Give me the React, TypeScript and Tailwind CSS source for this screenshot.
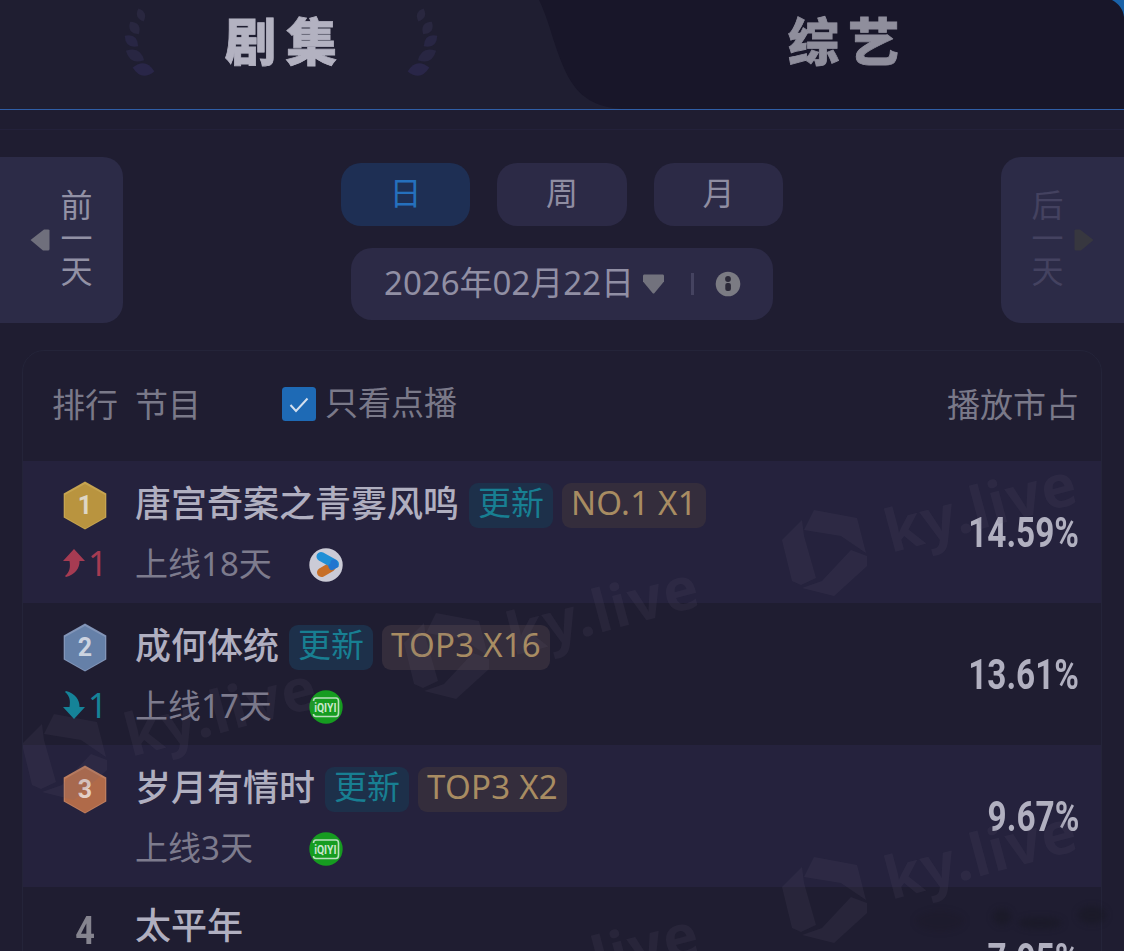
import clsx from "clsx";

type Platform = "youku" | "iqiyi";

type Show = {
  rank: number;
  title: string;
  change?: number;
  days?: number;
  platform?: Platform;
  tags: string[];
  share: string;
};

const shows: Show[] = [
  {
    rank: 1,
    title: "唐宫奇案之青雾风鸣",
    change: 1,
    days: 18,
    platform: "youku",
    tags: ["更新", "NO.1 X1"],
    share: "14.59%",
  },
  {
    rank: 2,
    title: "成何体统",
    change: -1,
    days: 17,
    platform: "iqiyi",
    tags: ["更新", "TOP3 X16"],
    share: "13.61%",
  },
  {
    rank: 3,
    title: "岁月有情时",
    days: 3,
    platform: "iqiyi",
    tags: ["更新", "TOP3 X2"],
    share: "9.67%",
  },
  {
    rank: 4,
    title: "太平年",
    tags: [],
    share: "7.95%",
  },
];

const medals = [
  { fill: "#b9943f", edge: "#c6a450", text: "#ded6c4" },
  { fill: "#6580a8", edge: "#8295b8", text: "#ccd3e0" },
  { fill: "#b06a49", edge: "#bd7d5e", text: "#e3cfc6" },
];

// logo centers on the card, same spacing as the tiled background
const watermarks = [
  [801, 202],
  [423, 305],
  [41, 406],
  [801, 549],
  [423, 652],
];

function Laurel({ flip }: { flip?: boolean }) {
  const leaves = [
    { x: 17, y: 7, rx: 4, ry: 7, r: -22, c: "#29273f" },
    { x: 10.5, y: 20, rx: 4.8, ry: 7.6, r: -35, c: "#292740" },
    { x: 7.5, y: 33, rx: 5, ry: 8.6, r: -52, c: "#282644" },
    { x: 11, y: 47.5, rx: 5.6, ry: 10.2, r: -63, c: "#282642" },
    { x: 19.5, y: 61.5, rx: 6.2, ry: 11, r: -80, c: "#292648" },
  ];
  return (
    <svg
      className={clsx("mt-2 h-[70px] w-[32px]", flip && "-scale-x-100")}
      viewBox="0 0 32 70"
    >
      {leaves.map((l, i) => (
        <path
          key={i}
          d={`M0 ${-l.ry}Q${l.rx * 2} 0 0 ${l.ry}Q${-l.rx * 2} 0 0 ${-l.ry}Z`}
          fill={l.c}
          transform={`translate(${l.x} ${l.y}) rotate(${l.r})`}
        />
      ))}
    </svg>
  );
}

function TopTabs() {
  return (
    <div className="relative flex h-[110px] border-b border-b-[#2f5ea6] bg-[#1f1e31]">
      <svg
        className="absolute inset-0 h-[109px] w-full"
        viewBox="0 0 1124 109"
        preserveAspectRatio="none"
      >
        <path
          d="M539 0C551 24 556 58 572 83C584 101 600 107 622 109H1124V0Z"
          fill="#181629"
        />
        <path d="M1112 0C1119 4 1123 9 1124 17V0Z" fill="#1a62a8" />
      </svg>
      <div className="relative flex w-[562px] justify-between pl-[124px] pr-[124px]">
        <Laurel />
        <span className="-mr-[10px] mt-px text-[51px] font-black leading-[80px] tracking-[10px] text-[#b3b2c1] [-webkit-text-stroke:0.8px_#b3b2c1]">
          剧集
        </span>
        <Laurel flip />
      </div>
      <div className="relative flex flex-1 justify-center">
        <span className="-mr-[10px] mt-px text-[51px] font-black leading-[80px] tracking-[9px] text-[#8f8e9c] [-webkit-text-stroke:0.8px_#8f8e9c]">
          综艺
        </span>
      </div>
    </div>
  );
}

function DayButton({ label, next }: { label: string; next?: boolean }) {
  return (
    <button
      className={clsx(
        "flex h-[166px] w-[123px] items-center bg-[#2c2b47]",
        next
          ? "flex-row-reverse justify-end rounded-l-[20px] pl-[30px] text-[#444260]"
          : "rounded-r-[20px] pl-[30px] text-[#9291a5]",
      )}
    >
      <svg
        className={clsx("h-[22px] w-[20px]", next && "ml-[10px] -scale-x-100")}
        viewBox="0 0 20 22"
      >
        <path
          d="M19.5 1.5Q19.5.5 18 .5H14L.5 11L13 21.5H18Q19.5 21.5 19.5 20Z"
          fill={next ? "#37373f" : "#6f6f7c"}
        />
      </svg>
      <span
        className={clsx(
          "mb-[6px] w-[33px] text-[32px] leading-[33px]",
          !next && "ml-[10px]",
        )}
      >
        {label}
      </span>
    </button>
  );
}

function Controls() {
  return (
    <div className="flex h-[193px] justify-between">
      <div>
        <DayButton label="前一天" />
      </div>
      <div className="flex flex-col items-center pt-[6px]">
        <div className="flex gap-[27px]">
          {["日", "周", "月"].map((t, i) => (
            <button
              key={t}
              className={clsx(
                "h-[63px] w-[129.5px] rounded-[20px] pb-[3px] text-[32px] leading-none",
                i === 0
                  ? "bg-[#1e2f54] text-[#2570bd]"
                  : "bg-[#2c2a46] text-[#8f8da2]",
              )}
            >
              {t}
            </button>
          ))}
        </div>
        <div className="mt-[22px] flex h-[72px] w-[422px] items-center rounded-[21px] bg-[#2c2a46] pl-[33px]">
          <span className="w-[249px] whitespace-nowrap pb-[3px] text-[33px] leading-none text-[#918fa4]">
            2026年02月22日
          </span>
          <svg className="ml-[9px] h-[22px] w-[23px]" viewBox="0 0 23 22">
            <path
              d="M2 1.5H21Q22 1.5 22 3V8.5L12.5 20Q11.5 21 10.5 20L1 8.5V3Q1 1.5 2 1.5Z"
              fill="#72727d"
            />
          </svg>
          <span className="ml-[26px] h-[22px] w-[3px] bg-[#454360]" />
          <svg className="ml-[21px] h-[26px] w-[26px]" viewBox="0 0 26 26">
            <circle cx="13" cy="13" r="12.3" fill="#7b7b83" />
            <circle cx="13" cy="8" r="2.9" fill="#2b2938" />
            <rect x="10.3" y="12" width="5.6" height="8" rx="2" fill="#2b2938" />
          </svg>
        </div>
      </div>
      <DayButton label="后一天" next />
    </div>
  );
}

function Medal({ rank }: { rank: number }) {
  const m = medals[rank - 1];
  return (
    <svg className="h-[49px] w-[44px]" viewBox="0 0 44 49">
      <path d="M22 .5L43.3 12.5V36.5L22 48.5L.7 36.5V12.5Z" fill={m.edge} />
      <path d="M22 3L42 14V36L22 47.5L2 36V14Z" fill={m.fill} />
      <text
        x="22"
        y="33"
        textAnchor="middle"
        fontSize="25"
        fontWeight="700"
        fill={m.text}
        fontFamily="Roboto"
      >
        {rank}
      </text>
    </svg>
  );
}

function Change({ value }: { value: number }) {
  const up = value > 0;
  return (
    <div
      className={clsx(
        "flex h-[30px] items-center text-[34px] leading-none",
        up ? "text-[#a63b52]" : "text-[#158398]",
      )}
    >
      <svg
        className={clsx("h-[28px] w-[22px]", !up && "-scale-y-100")}
        viewBox="0 0 22 28"
      >
        <path
          d="M11 0L22 12H16.5C17 19 12 25.500 3 28L2 27C7 23 7.500 18 6.500 12H0Z"
          fill="currentColor"
        />
      </svg>
      <span className="ml-[3px]">{Math.abs(value)}</span>
    </div>
  );
}

function PlatformIcon({ name }: { name: Platform }) {
  if (name === "youku") {
    return (
      <svg className="h-[34px] w-[34px]" viewBox="0 0 34 34">
        <circle cx="17" cy="17" r="16.7" fill="#cbcbd6" />
        <path d="M12.500 24.500L22 19" stroke="#c76f27" strokeWidth="9" strokeLinecap="round" />
        <path d="M12 8.500L25.500 16" stroke="#1f8fd6" strokeWidth="9" strokeLinecap="round" />
        <path d="M25 15L25.500 17L23 18.500" stroke="#2274cf" strokeWidth="7" strokeLinecap="round" fill="none" />
      </svg>
    );
  }
  return (
    <svg className="h-[34px] w-[34px]" viewBox="0 0 34 34">
      <circle cx="17" cy="17" r="16.7" fill="#169c20" />
      <path
        d="M4.500 11Q4.500 8 7 8H27Q29.500 8 29.500 11V23Q29.500 26.500 27 26.500H7Q4.500 26.500 4.500 24"
        stroke="#b9dfbd"
        strokeWidth="1.6"
        fill="none"
      />
      <g transform="translate(16.300 22) scale(0.8 1)">
        <text
          textAnchor="middle"
          fontSize="13"
          fontWeight="700"
          fontFamily="Roboto"
          fill="#c9e6cc"
        >
          iQIYI
        </text>
      </g>
    </svg>
  );
}

function Tag({ children }: { children: string }) {
  const isUpdate = children === "更新";
  return (
    <span
      className={clsx(
        "mr-[9px] h-[45px] whitespace-nowrap rounded-[9px] px-[9px] text-[33px] leading-[40px]",
        isUpdate
          ? "bg-[#1d304a] text-[#187f92]"
          : "bg-[#342d3c] tracking-[0.25px] text-[#a88c62]",
      )}
    >
      {children}
    </span>
  );
}

function ShowRow({ show }: { show: Show }) {
  const { rank, title, change, days, platform, tags, share } = show;
  return (
    <div
      className={clsx(
        "flex h-[142px] shrink-0 pr-[22px]",
        rank % 2 === 1 ? "bg-[#25223d]" : "bg-[#1f1d31]",
      )}
    >
      <div className="flex w-[112px] flex-col items-start pl-[40px] pt-[20px]">
        {rank <= 3 ? (
          <Medal rank={rank} />
        ) : (
          <span className="mt-[5px] w-[44px] scale-x-90 text-center font-[Roboto] text-[38px] font-bold leading-[38px] text-[#85848f]">
            {rank}
          </span>
        )}
        {change && (
          <div className="mt-[18px]">
            <Change value={change} />
          </div>
        )}
      </div>
      <div className="flex flex-1 flex-col pt-[22px]">
        <div
          className={clsx(
            "flex items-center",
            tags.length ? "h-[45px]" : "h-[36px]",
          )}
        >
          <span className="mb-[3px] mr-[10px] text-[36px] font-medium leading-none text-[#b0afc0]">
            {title}
          </span>
          {tags.map((t) => (
            <Tag key={t}>{t}</Tag>
          ))}
        </div>
        {platform && (
          <div className="mt-[14px] flex h-[46px] items-center">
            <span className="mb-[3px] w-[174px] text-[33px] leading-none text-[#7d7b8d]">
              上线{days}天
            </span>
            <PlatformIcon name={platform} />
          </div>
        )}
      </div>
      <span className="origin-right scale-x-[0.775] self-center font-[Roboto] text-[43px] font-bold leading-none text-[#b1b0c0]">
        {share}
      </span>
    </div>
  );
}

function Watermark({ x, y }: { x: number; y: number }) {
  return (
    <svg
      className="absolute h-[180px] w-[320px]"
      style={{ left: x - 50, top: y - 110 }}
      viewBox="-50 -110 320 180"
      fill="#6b6678"
      fillOpacity="0.12"
    >
      <path d="M-20 -23L-10 -43L33 -35L42 0L17 -17Z" />
      <path d="M-22 -33L-42 -13L-32 28L-23 32L-8 25L-20 -17Z" />
      <path d="M-22 35L10 43L43 13V3L27 -3L-2 28Z" />
      <text
        x="67"
        y="0"
        transform="rotate(-15 67 0)"
        fontFamily="Noto Sans"
        fontSize="59"
        fontWeight="700"
        textLength="196"
      >
        ky.live
      </text>
    </svg>
  );
}

function RankTable() {
  return (
    <div className="relative mx-[22px] flex h-[760px] flex-col overflow-hidden rounded-t-[22px] border border-[#242439] bg-[#1f1d31]">
      <div className="flex h-[110px] shrink-0 items-center pb-[4px] pl-[29px] pr-[22px] text-[33px] leading-none text-[#7a7989]">
        <span>排行</span>
        <span className="ml-[17px]">节目</span>
        <label className="ml-[81px] flex items-center">
          <svg className="h-[34px] w-[34px]" viewBox="0 0 34 34">
            <rect width="34" height="34" rx="3.500" fill="#1e6ab5" />
            <path
              d="M8.500 18L14 24L25.500 11.500"
              stroke="#d3dfee"
              strokeWidth="2"
              fill="none"
            />
          </svg>
          <span className="mb-[3px] ml-[9px]">只看点播</span>
        </label>
        <span className="ml-auto">播放市占</span>
      </div>
      {shows.map((s) => (
        <ShowRow key={s.rank} show={s} />
      ))}
      <div className="pointer-events-none absolute inset-0">
        {watermarks.map(([x, y]) => (
          <Watermark key={`${x}-${y}`} x={x} y={y} />
        ))}
      </div>
    </div>
  );
}

function App() {
  return (
    <div className="relative h-[951px] w-[1124px] overflow-hidden bg-[#1f1d31] font-['Noto_Sans','Noto_Sans_CJK_SC',sans-serif]">
      <TopTabs />
      <div className="mb-[27px] h-[20px] border-b border-[#23213a]" />
      <Controls />
      <RankTable />
      <svg
        className="absolute bottom-0 right-0 h-[50px] w-[214px] blur-[3px]"
        viewBox="0 0 214 50"
        fill="#17161f"
        fillOpacity="0.45"
      >
        <ellipse cx="30" cy="20" rx="24" ry="10" fillOpacity="0.2" />
        <ellipse cx="92" cy="16" rx="9" ry="8" />
        <ellipse cx="130" cy="22" rx="22" ry="6" />
        <ellipse cx="182" cy="14" rx="14" ry="9" />
      </svg>
    </div>
  );
}

export default App;
